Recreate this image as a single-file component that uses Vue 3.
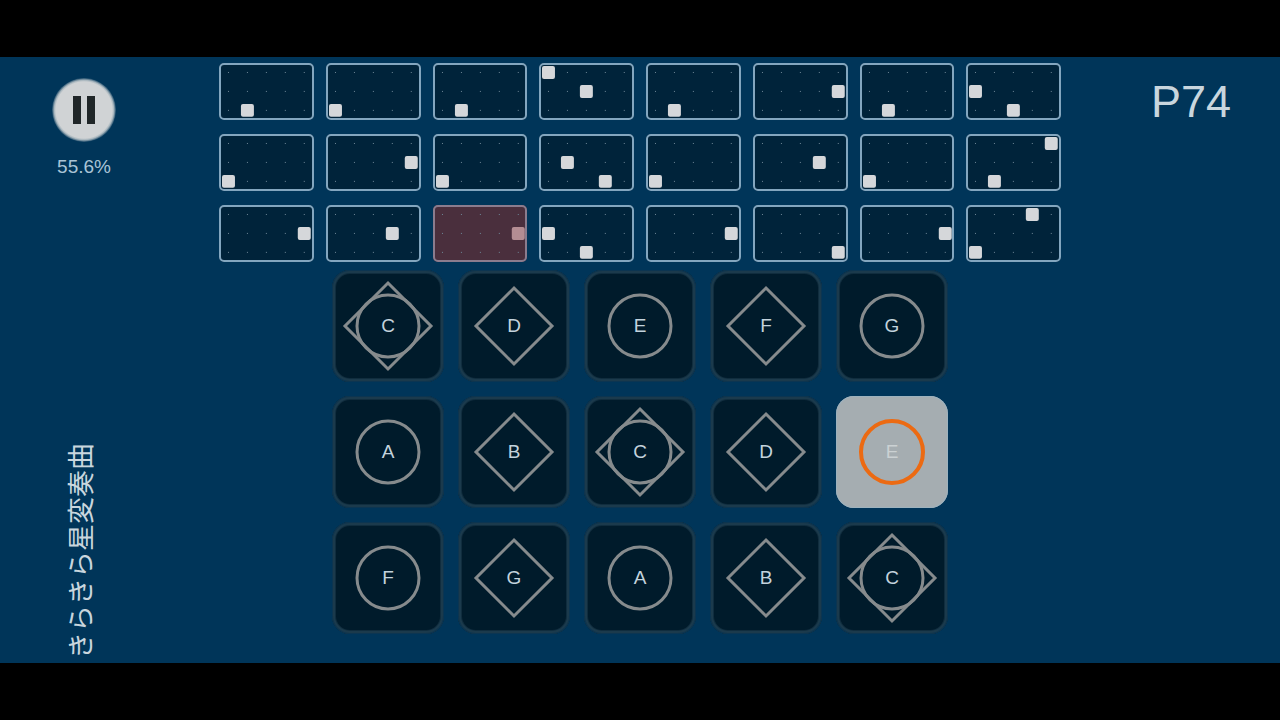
<script setup>
const strips = [
  [[1, 2]], [[0, 2]], [[1, 2]], [[0, 0], [2, 1]], [[1, 2]], [[4, 1]], [[1, 2]], [[0, 1], [2, 2]],
  [[0, 2]], [[4, 1]], [[0, 2]], [[1, 1], [3, 2]], [[0, 2]], [[3, 1]], [[0, 2]], [[4, 0], [1, 2]],
  [[4, 1]], [[3, 1]], [[4, 1]], [[0, 1], [2, 2]], [[4, 1]], [[4, 2]], [[4, 1]], [[3, 0], [0, 2]]
]
const current = 18
const activeKey = 9
const names = 'CDEFGABCDEFGABC'

// Every C carries both shapes; other keys alternate by column, rows alike.
const keys = [...names].map((name, i) => ({
  name,
  shape: name === 'C' ? 'both' : (i % 5) % 2 === 0 ? 'circle' : 'diamond'
}))

const dots = Array.from({ length: 15 }, (_, i) => ({ x: 10 + (i % 5) * 19, y: 9 + Math.floor(i / 5) * 19 }))
</script>

<template>
  <main class="screen">
    <div class="stage">
      <aside class="side">
        <button class="pause" type="button" aria-label="Pause">
          <svg viewBox="0 0 64 64" aria-hidden="true">
            <path d="M21 18h8v28h-8zM35 18h8v28h-8z" fill="#202628" />
          </svg>
        </button>
        <span class="percent">55.6%</span>
        <h1 class="song">きらきら星変奏曲</h1>
      </aside>

      <section class="centre">
        <div class="strips">
          <div v-for="(notes, i) in strips" :key="i" class="strip" :class="{ current: i === current }">
            <svg viewBox="0 0 95 57" aria-hidden="true">
              <rect v-for="(d, k) in dots" :key="k" class="dot" :x="d.x - 1" :y="d.y" width="1" height="1" />
              <rect
                v-for="([x, y], k) in notes" :key="'n' + k" class="note"
                :x="3 + x * 19" :y="3 + y * 19" width="13" height="13" rx="2"
              />
            </svg>
          </div>
        </div>

        <div class="keys">
          <button v-for="(key, i) in keys" :key="i" type="button" class="key" :class="{ active: i === activeKey }">
            <svg viewBox="0 0 112 112" aria-hidden="true">
              <path v-if="key.shape === 'diamond'" d="M56 18L94 56L56 94L18 56Z" />
              <path v-if="key.shape === 'both'" d="M56 13L99 56L56 99L13 56Z" />
              <circle v-if="key.shape !== 'diamond'" cx="56" cy="56" r="31" />
            </svg>
            <span class="name">{{ key.name }}</span>
          </button>
        </div>
      </section>

      <aside class="page">P74</aside>
    </div>
  </main>
</template>

<style>
body {
  background: #000;
}
</style>

<style scoped>
.screen {
  box-sizing: border-box;
  min-height: 100vh;
  padding: 57px 0;
  display: flex;
  background: #000;
  font-family: "Liberation Sans", "Noto Sans CJK JP", sans-serif;
}
.stage {
  flex: 1;
  box-sizing: border-box;
  padding: 6px 0 4px;
  display: grid;
  grid-template-columns: 1fr minmax(0, 842px) 1fr;
  background: #003559;
  color: #c9d6de;
}
.side {
  width: 168px;
  padding-top: 15px;
  display: flex;
  flex-direction: column;
  align-items: center;
}
.pause {
  width: 64px;
  height: 64px;
  padding: 0;
  border: 0;
  border-radius: 50%;
  background: radial-gradient(circle closest-side, #d0d3d5 88%, #a8b6be 93%, #1c4a69 100%);
}
.pause svg,
.strip svg,
.key svg {
  display: block;
  width: 100%;
}
.percent {
  margin-top: 13px;
  font-size: 19px;
  line-height: 24px;
  color: #a9c4d6;
}
.song {
  margin: auto 0 0;
  padding-left: 4px;
  font-size: 27px;
  line-height: 32px;
  font-weight: 400;
  writing-mode: vertical-rl;
  text-orientation: sideways;
  white-space: nowrap;
  transform: rotate(180deg);
}
.centre {
  display: flex;
  flex-direction: column;
  align-items: center;
  gap: 8px;
}
.strips {
  width: 100%;
  display: grid;
  grid-template-columns: repeat(8, 1fr);
  gap: 14px 12px;
}
.strip {
  position: relative;
  height: 57px;
  border-radius: 5px;
  background: #00233a;
}
.strip::after {
  content: "";
  position: absolute;
  inset: 0;
  border: 2px solid #83a6bf;
  border-radius: 5px;
}
.strip.current {
  background: #4a2f3d;
}
.strip.current::after {
  border-color: #8b7c8e;
}
.dot {
  fill: #6f8898;
}
.note {
  fill: #d5d7da;
}
.current .note {
  fill: #b48d93;
}
.keys {
  width: 616px;
  max-width: 100%;
  display: grid;
  grid-template-columns: repeat(5, 1fr);
  gap: 14px;
}
.key {
  position: relative;
  padding: 0;
  border: 0;
  border-radius: 18px;
  background: #001b2b;
  box-shadow: inset 0 0 0 1px #0c3551, inset 0 0 0 3px #1b3a4c, inset 0 0 0 4px #102d3e;
  color: #c3d3dd;
  font: 19px/22px "Liberation Sans", sans-serif;
}
.key path,
.key circle {
  fill: none;
  stroke: #868b8d;
  stroke-width: 3;
}
.name {
  position: absolute;
  inset: 0;
  display: grid;
  place-items: center;
}
.key.active {
  background: #a5adb1;
  box-shadow: inset 0 0 0 1px #9db2be;
  color: #cbd1d3;
}
.key.active circle {
  stroke: #ec6a12;
  stroke-width: 4;
}
.page {
  justify-self: end;
  padding: 13px 49px 0 0;
  font-size: 45px;
  line-height: 52px;
}
</style>
